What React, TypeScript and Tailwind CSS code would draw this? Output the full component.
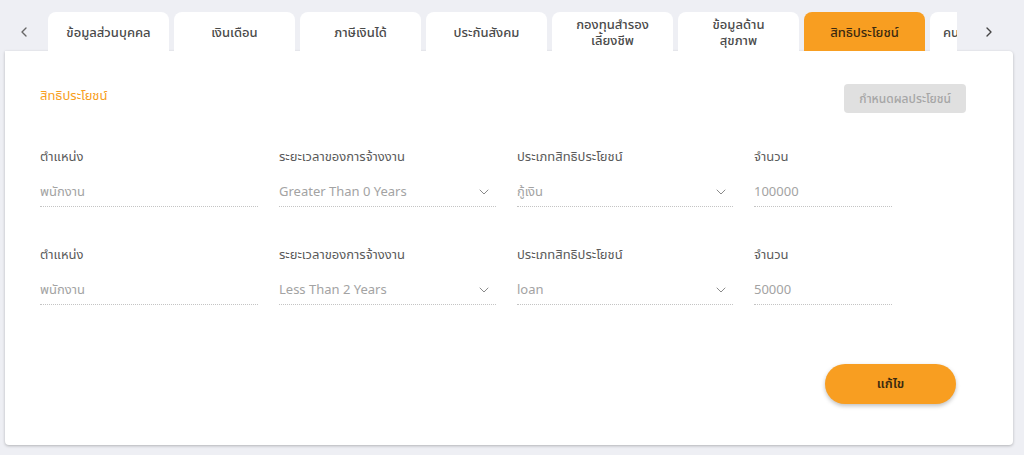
import React from 'react';
import { ChevronLeft, ChevronRight, ChevronDown } from 'lucide-react';

const tabs = [
  { label: 'ข้อมูลส่วนบุคคล' },
  { label: 'เงินเดือน' },
  { label: 'ภาษีเงินได้' },
  { label: 'ประกันสังคม' },
  { label: 'กองทุนสำรอง\nเลี้ยงชีพ' },
  { label: 'ข้อมูลด้าน\nสุขภาพ' },
  { label: 'สิทธิประโยชน์', active: true },
  { label: 'คนในครอบครัว' },
];

const rows = [
  { position: 'พนักงาน', period: 'Greater Than 0 Years', type: 'กู้เงิน', amount: '100000' },
  { position: 'พนักงาน', period: 'Less Than 2 Years', type: 'loan', amount: '50000' },
];

function Field({ label, value, select, width }: { label: string; value: string; select?: boolean; width: string }) {
  return (
    <div className={width}>
      <div className="text-[13px] text-[#5a5a5a] leading-5">{label}</div>
      <div className="mt-[15px] flex items-center justify-between border-b border-dotted border-[#c4c4c4] pb-[4px] h-[26px]">
        <span className="text-[13px] text-[#a3a3a3]">{value}</span>
        {select && <ChevronDown className="w-4 h-4 text-[#8a8a8a] mr-1" strokeWidth={1.5} />}
      </div>
    </div>
  );
}

export default function App() {
  return (
    <div
      className="w-[1024px] h-[455px] bg-[#eeeff4] overflow-hidden"
      style={{ fontFamily: '"Noto Sans", "Noto Sans Thai", Loma, "Open Sans", sans-serif' }}
    >
      <div className="flex items-end h-[51px] pl-[16px]">
        <div className="w-[32px] h-[39px] flex items-center justify-start">
          <ChevronLeft className="w-4 h-4 text-[#666]" />
        </div>
        <div className="flex gap-[5px] w-[909px] overflow-hidden">
          {tabs.map((t) => (
            <div
              key={t.label}
              className={`shrink-0 w-[121px] h-[39px] rounded-t-lg flex items-center justify-center text-center whitespace-pre-line text-[13px] leading-[16px] font-medium ${
                t.active ? 'bg-[#f89e21] text-[#3b2a10]' : 'bg-white text-[#4a4a4a]'
              } ${t.label === 'คนในครอบครัว' ? 'justify-start pl-[13px]' : ''}`}
            >
              {t.label}
            </div>
          ))}
        </div>
        <div className="w-[52px] h-[39px] flex items-center justify-center pl-3">
          <ChevronRight className="w-4 h-4 text-[#444]" />
        </div>
      </div>

      <div className="ml-[5px] w-[1008px] h-[394px] bg-white rounded-b rounded-tr shadow-[0_1px_3px_rgba(0,0,0,0.25)] px-[35px] pt-[33px] flex flex-col">
        <div className="flex items-start justify-between">
          <div className="text-[13px] text-[#f89e21] mt-[2px]">สิทธิประโยชน์</div>
          <div className="mr-[12px] h-[29px] px-[15px] flex items-center bg-[#e0e0e0] rounded text-[12px] font-medium text-[#a6a6a6]">
            กำหนดผลประโยชน์
          </div>
        </div>

        <div className="mt-[33px] flex flex-col gap-[37px]">
          {rows.map((r, i) => (
            <div key={i} className="flex gap-[21px]">
              <Field label="ตำแหน่ง" value={r.position} width="w-[218px]" />
              <Field label="ระยะเวลาของการจ้างงาน" value={r.period} select width="w-[217px]" />
              <Field label="ประเภทสิทธิประโยชน์" value={r.type} select width="w-[216px]" />
              <Field label="จำนวน" value={r.amount} width="w-[138px]" />
            </div>
          ))}
        </div>

        <div className="flex justify-end mt-auto mb-[41px] mr-[22px]">
          <button className="w-[131px] h-[40px] rounded-full bg-[#f89e21] text-[13px] font-semibold text-[#3b2a10] shadow-[0_2px_4px_rgba(0,0,0,0.25)]">
            แก้ไข
          </button>
        </div>
      </div>
    </div>
  );
}
